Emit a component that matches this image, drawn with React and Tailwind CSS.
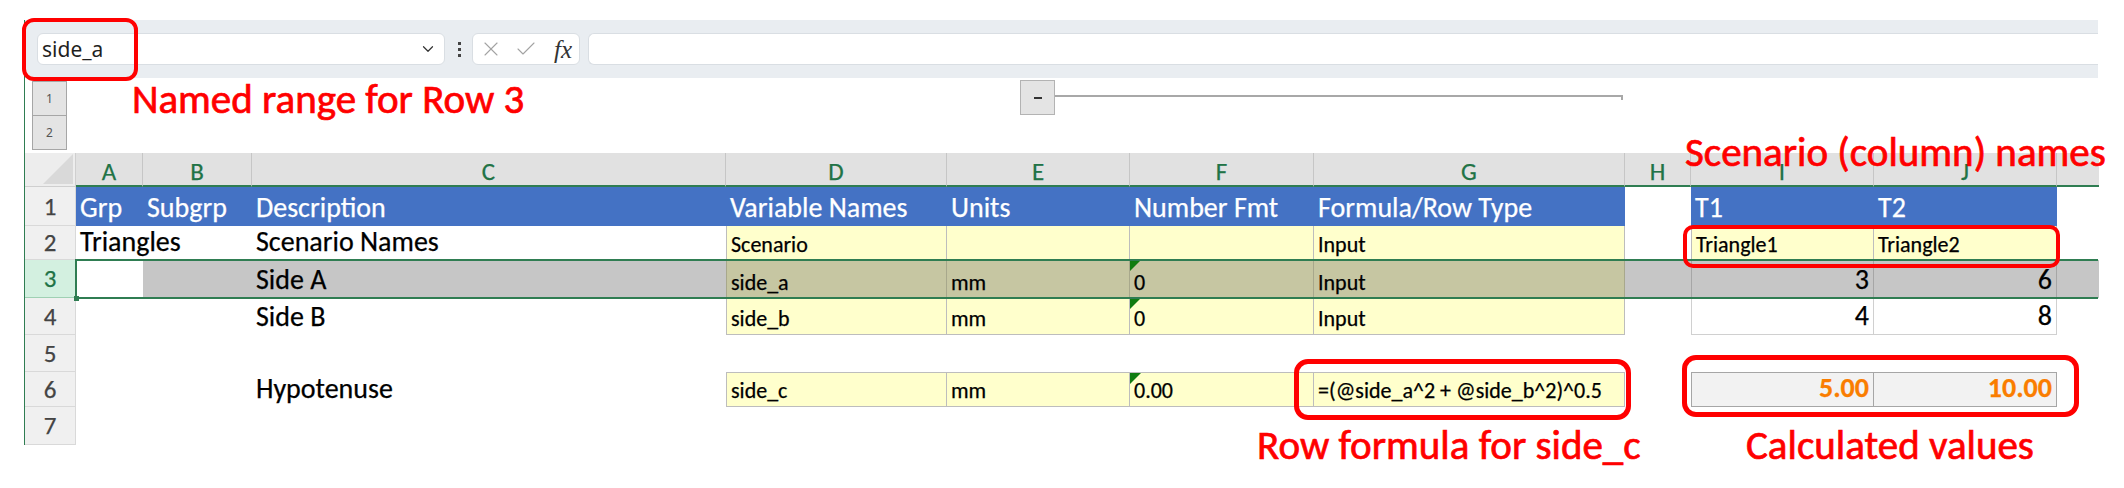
import { ChevronDown, X, Check } from 'lucide-react';

const GREEN = 'border-[#2f7d52]';

// column widths: row header, A..J, sliver of K
const COLS = 'grid-cols-[51px_67px_109px_474px_221px_183px_184px_311px_66px_183px_183px_42px]';
const ROWS = 'grid-rows-[34px_39px_34px_38px_37px_37px_35px_38px]';

const letters = ['A', 'B', 'C', 'D', 'E', 'F', 'G', 'H', 'I', 'J', ''];

const big = 'text-[28px]';
const small = 'text-[22px]';
const txt = 'flex items-end pb-[4px] pl-[4px] leading-none whitespace-nowrap';
const num = 'flex items-end justify-end pb-[4px] pr-[4px] leading-none';

const blue = `bg-[#4472c4] text-white ${big} ${txt}`;
const yellow = `relative bg-[#ffffcc] border-[#bdbdbd] ${small} ${txt}`;
const yellowSel = `relative bg-[#c6c6a2] border-r border-[#a8a88c] ${small} ${txt}`;
const graySel = 'bg-[#c6c6c6]';
const red = 'absolute whitespace-nowrap text-[41px] leading-none text-[#ff0000] [-webkit-text-stroke:0.7px]';

function Tri() {
    return <span className="absolute left-0 top-0 h-0 w-0 border-t-[11px] border-r-[11px] border-t-[#107c10] border-r-transparent" />;
}

const rows = [
    {
        n: '1',
        cells: [
            { c: blue, t: 'Grp' },
            { c: blue, t: 'Subgrp' },
            { c: blue, t: 'Description' },
            { c: blue, t: 'Variable Names' },
            { c: blue, t: 'Units' },
            { c: blue, t: 'Number Fmt' },
            { c: blue, t: 'Formula/Row Type' },
            { c: '' },
            { c: blue, t: 'T1' },
            { c: blue, t: 'T2' },
            { c: '' },
        ],
    },
    {
        n: '2',
        cells: [
            { c: `${big} ${txt}`, t: 'Triangles' },
            { c: '' },
            { c: `${big} ${txt}`, t: 'Scenario Names' },
            { c: `${yellow} border-x`, t: 'Scenario' },
            { c: `${yellow} border-r` },
            { c: `${yellow} border-r` },
            { c: `${yellow} border-r`, t: 'Input' },
            { c: '' },
            { c: `${yellow} border-x`, t: 'Triangle1' },
            { c: `${yellow} border-r`, t: 'Triangle2' },
            { c: '' },
        ],
    },
    {
        n: '3',
        sel: true,
        cells: [
            { c: 'bg-white' },
            { c: graySel },
            { c: `${graySel} ${big} ${txt}`, t: 'Side A' },
            { c: `${yellowSel} border-l`, t: 'side_a' },
            { c: yellowSel, t: 'mm' },
            { c: yellowSel, t: '0', tri: true },
            { c: yellowSel, t: 'Input' },
            { c: graySel },
            { c: `${graySel} border-x border-[#a6a6a6] ${big} ${num}`, t: '3' },
            { c: `${graySel} border-r border-[#a6a6a6] ${big} ${num}`, t: '6' },
            { c: graySel },
        ],
    },
    {
        n: '4',
        cells: [
            { c: '' },
            { c: '' },
            { c: `${big} ${txt}`, t: 'Side B' },
            { c: `${yellow} border-x border-b`, t: 'side_b' },
            { c: `${yellow} border-r border-b`, t: 'mm' },
            { c: `${yellow} border-r border-b`, t: '0', tri: true },
            { c: `${yellow} border-r border-b`, t: 'Input' },
            { c: '' },
            { c: `border-x border-b border-[#d0d0d0] ${big} ${num}`, t: '4' },
            { c: `border-r border-b border-[#d0d0d0] ${big} ${num}`, t: '8' },
            { c: '' },
        ],
    },
    { n: '5', cells: Array(11).fill({ c: '' }) },
    {
        n: '6',
        cells: [
            { c: '' },
            { c: '' },
            { c: `${big} ${txt}`, t: 'Hypotenuse' },
            { c: `${yellow} border`, t: 'side_c' },
            { c: `${yellow} border-y border-r`, t: 'mm' },
            { c: `${yellow} border-y border-r`, t: '0.00', tri: true },
            { c: `${yellow} border-y border-r`, t: '=(@side_a^2 + @side_b^2)^0.5' },
            { c: '' },
            { c: `bg-[#f2f2f2] border border-[#a6a6a6] font-bold text-[#fa7d00] ${big} ${num}`, t: '5.00' },
            { c: `bg-[#f2f2f2] border-y border-r border-[#a6a6a6] font-bold text-[#fa7d00] ${big} ${num}`, t: '10.00' },
            { c: '' },
        ],
    },
    { n: '7', cells: Array(11).fill({ c: '' }) },
];

function Toolbar() {
    return (
        <div className="flex h-[58px] items-center bg-[#e9edf1] pl-[12px]">
            <div className="flex h-[32px] w-[408px] items-center justify-between rounded-[6px] border border-[#d9dee3] bg-white pl-[4px] pr-[7px]">
                <span className="font-['Noto_Sans'] text-[21px] leading-none text-[#1f1f1f]">side_a</span>
                <ChevronDown size={18} strokeWidth={1.6} className="text-[#333]" />
            </div>
            <div className="ml-[13px] flex flex-col gap-[3px]">
                <span className="h-[3px] w-[3px] bg-[#444]" />
                <span className="h-[3px] w-[3px] bg-[#444]" />
                <span className="h-[3px] w-[3px] bg-[#444]" />
            </div>
            <div className="ml-[11px] flex h-[32px] w-[108px] items-center rounded-[6px] border border-[#d9dee3] bg-white pl-[6px]">
                <X size={24} strokeWidth={1.1} className="text-[#a3a3a3]" />
                <Check size={24} strokeWidth={1.1} className="ml-[11px] text-[#a3a3a3]" />
                <span className="ml-[16px] font-['Liberation_Serif'] text-[25px] italic leading-none text-[#333]">fx</span>
            </div>
            <div className="ml-[8px] h-[32px] flex-1 rounded-l-[6px] border border-r-0 border-[#d9dee3] bg-white" />
        </div>
    );
}

function Outline() {
    return (
        <div className="flex h-[75px] items-start font-['Noto_Sans']">
            <div className="ml-[7px] mt-[3px] flex w-[35px] flex-col">
                <div className="flex h-[35px] items-center justify-center border border-[#a6a6a6] bg-[#e4e4e4] text-[12px] text-[#555]">1</div>
                <div className="flex h-[34px] items-center justify-center border border-t-0 border-[#a6a6a6] bg-[#e4e4e4] text-[12px] text-[#555]">2</div>
            </div>
            <div className="ml-[953px] mt-[2px] flex h-[35px] w-[35px] items-center justify-center border border-[#b3b3b3] bg-[#e4e4e4]">
                <span className="h-[2px] w-[8px] bg-[#333]" />
            </div>
            <div className="mt-[17px] h-[5px] w-[568px] border-r-2 border-t-2 border-[#a8a8a8]" />
        </div>
    );
}

function Sheet() {
    return (
        <div className={`relative grid ${COLS} ${ROWS} [-webkit-text-stroke:0.25px]`}>
            {/* column headers */}
            <div className="relative bg-[#ededed] border-r border-b border-[#cfcfcf]">
                <span className="absolute bottom-[2px] right-[2px] h-0 w-0 border-b-[30px] border-l-[30px] border-b-[#d9d9d9] border-l-transparent" />
            </div>
            {letters.map((l, i) => (
                <div key={i} className={`flex items-end justify-center bg-[#e1e1e1] pb-[1px] text-[25px] leading-none text-[#217346] border-[#c6c6c6] border-b-2 border-b-[#2f7d52] ${i < 10 ? 'border-r' : ''}`}>
                    {l}
                </div>
            ))}

            {rows.map((r) => (
                <div key={r.n} className="contents">
                    <div className={`flex items-center justify-center border-b border-r text-[25px] leading-none ${r.sel ? 'bg-[#d3f0e0] text-[#217346] border-[#9fd0b3]' : 'bg-[#f0f0f0] text-[#444] border-[#d9d9d9]'}`}>
                        {r.n}
                    </div>
                    {r.cells.map((cell, i) => (
                        <div key={i} className={cell.c}>
                            {cell.tri && <Tri />}
                            {cell.t}
                        </div>
                    ))}
                </div>
            ))}

            {/* row 3 selection outline */}
            <div className={`pointer-events-none absolute left-[50px] right-0 top-[106px] h-[40px] border-y-2 border-l-2 ${GREEN}`} />
            <div className="absolute left-[49px] top-[143px] h-[5px] w-[5px] bg-[#2f7d52]" />
        </div>
    );
}

export default function App() {
    return (
        <div className="relative h-[488px] w-[2124px] overflow-hidden bg-white pl-[24px] pt-[20px] font-['Carlito','Calibri',sans-serif] text-black">
            <div className={`w-[2074px] border-l ${GREEN}`}>
                <Toolbar />
                <Outline />
                <Sheet />
            </div>

            {/* annotations */}
            <div className="absolute left-[22px] top-[18px] h-[63px] w-[116px] rounded-[12px] border-[4px] border-[#ff0000]" />
            <div className={`${red} left-[132px] top-[79px]`}>Named range for Row 3</div>

            <div className={`${red} left-[1685px] top-[132px]`}>Scenario (column) names</div>
            <div className="absolute left-[1683px] top-[225px] h-[43px] w-[377px] rounded-[10px] border-[4px] border-[#ff0000]" />

            <div className="absolute left-[1294px] top-[359px] h-[61px] w-[337px] rounded-[14px] border-[5px] border-[#ff0000]" />
            <div className="absolute left-[1682px] top-[355px] h-[62px] w-[397px] rounded-[14px] border-[5px] border-[#ff0000]" />

            <div className={`${red} left-[1257px] top-[425px]`}>Row formula for side_c</div>
            <div className={`${red} left-[1746px] top-[425px]`}>Calculated values</div>
        </div>
    );
}
